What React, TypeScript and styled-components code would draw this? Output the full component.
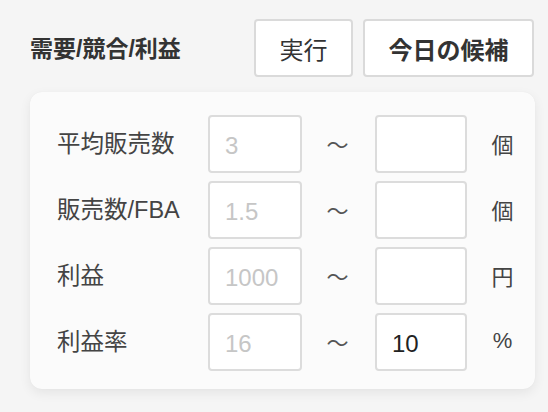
import React from 'react'
import styled, { createGlobalStyle } from 'styled-components'

const GlobalStyle = createGlobalStyle`
  html, body {
    margin: 0;
    padding: 0;
    background: #f5f5f5;
    font-family: "Liberation Sans", "Noto Sans CJK JP", sans-serif;
    color: #333;
  }
  * {
    box-sizing: border-box;
  }
`

const Page = styled.div`
  width: 548px;
  height: 412px;
  padding: 19px 14px 0 30px;
`

const Header = styled.div`
  display: flex;
  align-items: center;
  justify-content: space-between;
`

const Title = styled.h2`
  margin: 0 0 2px;
  font-size: 23px;
  font-weight: 700;
  color: #333;
`

const ButtonGroup = styled.div`
  display: flex;
  gap: 10px;
`

const Button = styled.button<{ bold?: boolean; w: number }>`
  width: ${({ w }) => w}px;
  height: 58px;
  border: 2px solid #dadada;
  border-radius: 4px;
  background: #fff;
  color: #333;
  font-family: "Liberation Sans", "Noto Sans CJK JP", sans-serif;
  font-size: 24px;
  font-weight: ${({ bold }) => (bold ? 700 : 400)};
  padding: 0;
  cursor: pointer;
`

const Card = styled.div`
  margin-top: 15px;
  width: 505px;
  padding: 23px 0 18px 27px;
  background: #fbfbfb;
  border-radius: 12px;
  box-shadow: 0 4px 12px rgba(0, 0, 0, 0.07), 0 0 1px rgba(0, 0, 0, 0.06);
  display: flex;
  flex-direction: column;
  gap: 8px;
`

const Row = styled.div`
  display: grid;
  grid-template-columns: 151px 94px 73px 92px 1fr;
  align-items: center;
  height: 58px;
`

const Label = styled.span`
  font-size: 23.5px;
  color: #444;
  padding-bottom: 4px;
`

const Field = styled.input`
  width: 100%;
  height: 58px;
  border: 2px solid #dcdcdc;
  border-radius: 4px;
  background: #fff;
  padding: 4px 0 0 15px;
  font-family: "Liberation Sans", "Noto Sans CJK JP", sans-serif;
  font-size: 24px;
  color: #222;
  outline: none;
  &::placeholder {
    color: #c6c6c6;
  }
`

const Tilde = styled.span`
  justify-self: center;
  font-family: "Noto Sans CJK JP", sans-serif;
  font-size: 22px;
  color: #555;
  margin-left: -2px;
  padding-bottom: 2px;
`

const Unit = styled.span`
  justify-self: center;
  font-size: 22px;
  color: #444;
  margin-left: 3px;
  padding-bottom: 3px;
`

const rows = [
  { label: '平均販売数', min: '3', max: '', unit: '個' },
  { label: '販売数/FBA', min: '1.5', max: '', unit: '個' },
  { label: '利益', min: '1000', max: '', unit: '円' },
  { label: '利益率', min: '16', max: '10', unit: '%' },
]

export default function App() {
  return (
    <>
      <GlobalStyle />
      <Page>
        <Header>
          <Title>需要/競合/利益</Title>
          <ButtonGroup>
            <Button w={99}>実行</Button>
            <Button w={171} bold>今日の候補</Button>
          </ButtonGroup>
        </Header>
        <Card>
          {rows.map((r) => (
            <Row key={r.label}>
              <Label>{r.label}</Label>
              <Field placeholder={r.min} />
              <Tilde>〜</Tilde>
              <Field defaultValue={r.max} />
              <Unit>{r.unit}</Unit>
            </Row>
          ))}
        </Card>
      </Page>
    </>
  )
}
